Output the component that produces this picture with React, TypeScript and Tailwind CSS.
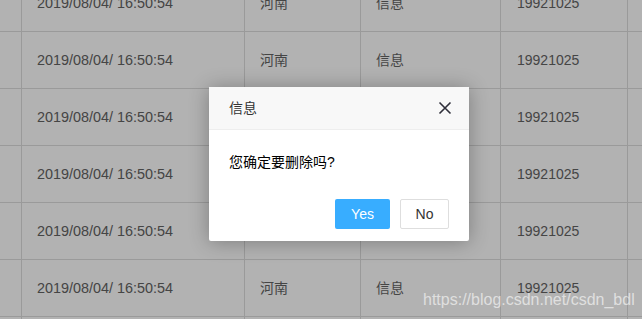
import React from "react";

const rows = Array.from({ length: 7 });

function TableRow() {
  return (
    <div className="grid h-[57px] grid-cols-[22px_223px_116px_140px_127px_1fr] border-b border-[#dddddd] text-[14px] text-[#636363]">
      <div className="border-r border-[#dddddd]" />
      <div className="flex items-center border-r border-[#dddddd] pl-[15px] pt-[1px] text-[14.4px]">2019/08/04/ 16:50:54</div>
      <div className="flex items-center border-r border-[#dddddd] pl-[15px] pt-[1px]">河南</div>
      <div className="flex items-center border-r border-[#dddddd] pl-[15px] pt-[1px]">信息</div>
      <div className="flex items-center border-r border-[#dddddd] pl-[16px] pt-[1px]">19921025</div>
      <div />
    </div>
  );
}

export default function App() {
  return (
    <div
      className="relative h-[319px] w-[642px] overflow-hidden bg-white"
      style={{ fontFamily: '"Liberation Sans", Arial, "Noto Sans CJK SC", sans-serif' }}
    >
      {/* table behind the mask */}
      <div className="-mt-[25px] flex flex-col">
        {rows.map((_, i) => (
          <TableRow key={i} />
        ))}
      </div>

      {/* shade */}
      <div className="absolute inset-0 bg-black/30" />

      {/* confirm dialog */}
      <div className="absolute left-[209px] top-[87px] w-[260px] rounded-[2px] bg-white shadow-[0_1px_20px_rgba(0,0,0,0.3)]">
        <div className="flex h-[43px] items-center justify-between border-b border-[#eeeeee] bg-[#f8f8f8] pl-[20px] pr-[17px] text-[14px] text-[#333333]">
          <span>信息</span>
          <svg width="14" height="14" viewBox="0 0 14 14" className="text-[#2f2f3a]">
            <path d="M1.5 1.5 L12.5 12.5 M12.5 1.5 L1.5 12.5" stroke="currentColor" strokeWidth="1.6" fill="none" />
          </svg>
        </div>
        <div className="px-[20px] pt-[20px] pb-[20px] text-[14px] leading-[24px] text-black">您确定要删除吗?</div>
        <div className="flex justify-end gap-[10px] pr-[20px] pb-[12px] pt-[5px]">
          <button className="flex h-[30px] w-[55px] items-center justify-center rounded-[2px] bg-[#38adff] text-[14px] text-white">
            Yes
          </button>
          <button className="flex h-[30px] w-[49px] items-center justify-center rounded-[2px] border border-[#dedede] bg-white text-[14px] text-[#333333]">
            No
          </button>
        </div>
      </div>

      {/* watermark */}
      <div className="absolute left-[423px] top-[290px] text-[16px] leading-[20px] text-white/60">
        https://blog.csdn.net/csdn_bdl
      </div>
    </div>
  );
}
